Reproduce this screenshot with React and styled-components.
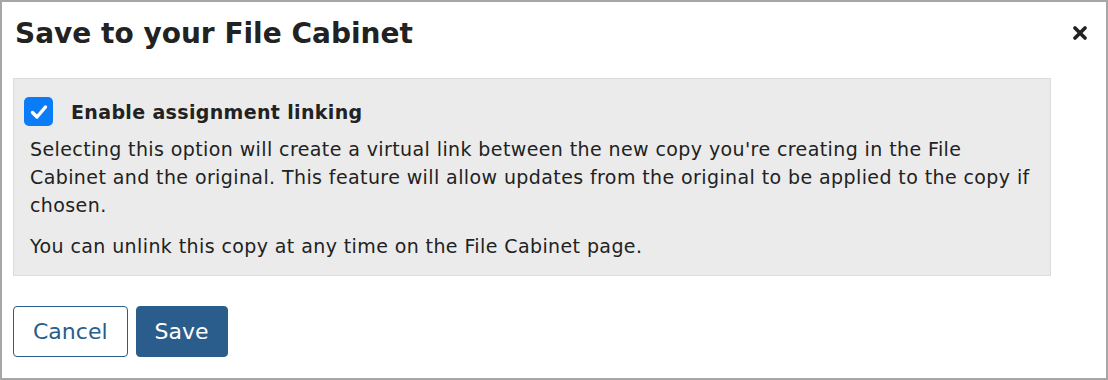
import styled, { createGlobalStyle } from 'styled-components'

const Global = createGlobalStyle`
  html, body {
    margin: 0;
    padding: 0;
    background: #fff;
  }
  body {
    font-family: "DejaVu Sans", Verdana, sans-serif;
    color: #222;
  }
`

const Dialog = styled.div`
  box-sizing: border-box;
  width: 1108px;
  height: 380px;
  border: 2px solid #a6a6a6;
  padding: 0 11px;
  display: flex;
  flex-direction: column;
`

const Header = styled.div`
  display: flex;
  align-items: center;
  justify-content: space-between;
  height: 62px;
`

const Title = styled.h1`
  margin: 0 0 0 2px;
  font-size: 28px;
  font-weight: bold;
  color: #222;
`

const CloseButton = styled.button`
  border: none;
  background: none;
  padding: 0;
  margin-right: 7px;
  width: 16px;
  height: 16px;
  display: flex;
  align-items: center;
  justify-content: center;
  cursor: pointer;
`

const Panel = styled.div`
  box-sizing: border-box;
  width: 1038px;
  margin-top: 14px;
  background: #ebebeb;
  border: 1px solid #dcdcdc;
  padding: 18px 14px 15px 16px;
`

const CheckRow = styled.label`
  display: flex;
  align-items: center;
  gap: 18px;
  margin-left: -6px;
  font-size: 19px;
  letter-spacing: 0.35px;
  font-weight: bold;
  color: #222;
`

const Box = styled.span`
  width: 29px;
  height: 29px;
  border-radius: 5px;
  background: #0b7cf7;
  display: flex;
  align-items: center;
  justify-content: center;
`

const Text = styled.p`
  margin: ${p => (p.$first ? '9px' : '13px')} 0 0 0;
  font-size: 19px;
  letter-spacing: 0.4px;
  line-height: 28px;
  color: #222;
`

const Actions = styled.div`
  display: flex;
  gap: 8px;
  margin-top: 30px;
`

const Button = styled.button`
  box-sizing: border-box;
  height: 51px;
  padding: 0 ${p => (p.$primary ? '18px' : '19px')};
  font-family: "DejaVu Sans", Verdana, sans-serif;
  font-size: 22px;
  border-radius: 4px;
  border: 1px solid #2a5d8b;
  background: ${p => (p.$primary ? '#2a5d8b' : '#fff')};
  color: ${p => (p.$primary ? '#fff' : '#2a5d8b')};
  cursor: pointer;
`

export default function App() {
  return (
    <>
      <Global />
      <Dialog>
        <Header>
          <Title>Save to your File Cabinet</Title>
          <CloseButton aria-label="Close">
            <svg width="14" height="14" viewBox="0 0 14 14">
              <path d="M2 2 L12 12 M12 2 L2 12" stroke="#222" strokeWidth="3.6" strokeLinecap="round" />
            </svg>
          </CloseButton>
        </Header>
        <Panel>
          <CheckRow>
            <Box>
              <svg width="20" height="20" viewBox="0 0 20 20">
                <path d="M3.5 10.5 L8 15 L16.5 5" fill="none" stroke="#fff" strokeWidth="3.4" strokeLinecap="round" strokeLinejoin="round" />
              </svg>
            </Box>
            Enable assignment linking
          </CheckRow>
          <Text $first>
            Selecting this option will create a virtual link between the new copy you're creating in the File
            Cabinet and the original. This feature will allow updates from the original to be applied to the copy if
            chosen.
          </Text>
          <Text>You can unlink this copy at any time on the File Cabinet page.</Text>
        </Panel>
        <Actions>
          <Button>Cancel</Button>
          <Button $primary>Save</Button>
        </Actions>
      </Dialog>
    </>
  )
}
